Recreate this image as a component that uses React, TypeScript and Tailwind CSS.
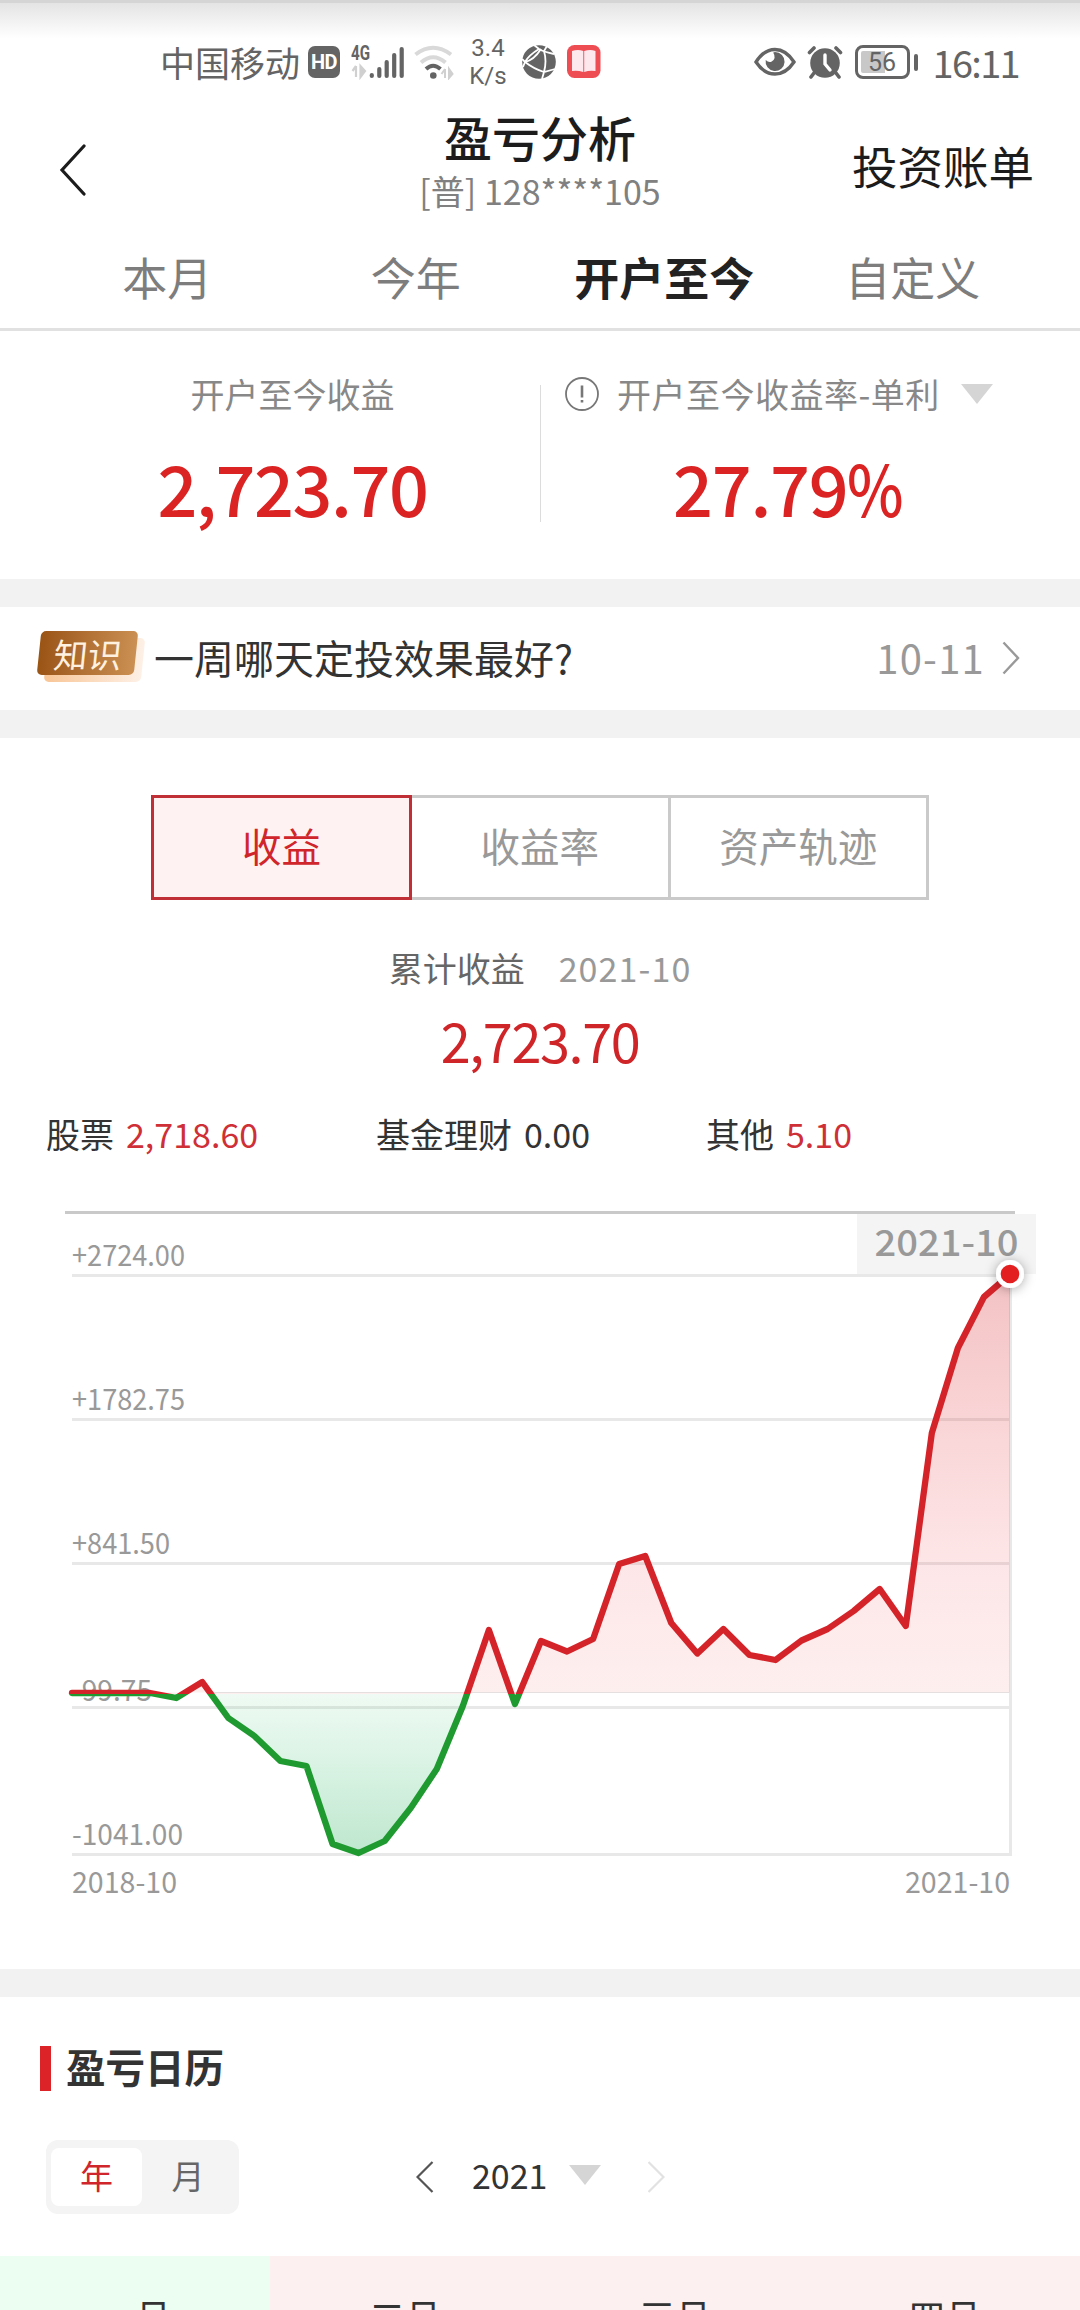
import React, {useState} from "react";
import clsx from "clsx";

const TABS = ["本月", "今年", "开户至今", "自定义"];

const MODES = ["收益", "收益率", "资产轨迹"];

const BREAKDOWN = [
    {label: "股票", value: "2,718.60", up: true},
    {label: "基金理财", value: "0.00", up: false},
    {label: "其他", value: "5.10", up: true},
];

const MONTHS = [
    {label: "一月", loss: true},
    {label: "二月", loss: false},
    {label: "三月", loss: false},
    {label: "四月", loss: false},
];

/**
 * Monthly points in chart space, 2018-10 to 2021-10
 */
const SERIES = [
    483, 483, 483, 483, 488, 472, 508, 526, 551, 556,
    634, 643, 631, 598, 559, 496, 420, 494, 431, 441.5,
    429, 354, 346, 413, 443.5, 419, 445, 450, 430.5, 419,
    401, 379, 416, 223, 138, 87, 64.5,
];

const ZERO = 482.5;
const LEFT = 72;
const RIGHT = 1010;

const GRID = [
    {y: 64.5, label: "+2724.00", width: 113},
    {y: 208.5, label: "+1782.75", width: 113},
    {y: 352.5, label: "+841.50", width: 98},
    {y: 496.5, label: "-99.75", width: 80},
    {y: 643.5, label: "-1041.00", width: 111},
];

function StatusBar() {

    return (
        <div className="flex h-[104px] items-start border-t-[3px] border-[#d5d5d5] bg-linear-to-b from-[#e4e4e4] to-white to-35% pt-[35px] text-[#646464]">

            {/* LEFT */}
            <div className="ml-[160px] flex h-[48px] items-center">

                <span className="w-[148px] text-[35px] leading-[48px] whitespace-nowrap">中国移动</span>

                <span className="flex h-[32px] w-[32px] items-center justify-center rounded-[7px] bg-[#646464] font-[Roboto] text-[20px] leading-none font-bold tracking-[-0.5px] text-white">
                    HD
                </span>

                {/* Mobile signal */}
                <svg width="56" height="36" viewBox="0 0 56 36" className="ml-[11px]">
                    <text x="0" y="16" fontFamily="Roboto" fontSize="20" fontWeight="700" fill="#646464" textLength="19" lengthAdjust="spacingAndGlyphs">4G</text>
                    <path d="M5 22v11M1.500 27l3.500-5M9.500 22v11l4.500-6z" stroke="#d0d0d0" strokeWidth="2.200" fill="#d0d0d0"/>
                    <g stroke="#646464" strokeWidth="4.200" strokeLinecap="round">
                        <path d="M20.800 31v1M28.300 25v7M35.700 18v14M43.200 11v21M50.700 5v27"/>
                    </g>
                </svg>

                {/* Wifi */}
                <svg width="42" height="36" viewBox="0 0 42 36" className="ml-[7px]">
                    <g fill="none" strokeWidth="4">
                        <path d="M1.500 10.500Q19 -3 37 10.500" stroke="#d9d9d9"/>
                        <path d="M7 18.500Q19 8 31.500 18.500" stroke="#d9d9d9"/>
                        <path d="M12 25Q19 18.500 26.500 25" stroke="#646464"/>
                    </g>
                    <circle cx="19.300" cy="31.500" r="3.300" fill="#646464"/>
                    <path d="M31 25v9M27.500 30l3.500-5M35 34v-9l3.500 5z" stroke="#d0d0d0" strokeWidth="2" fill="#d0d0d0"/>
                </svg>

                {/* Net speed */}
                <div className="ml-[12px] flex w-[40px] flex-col items-center text-center font-[Roboto] text-[24px] leading-[28px]">
                    <span>3.4</span>
                    <span>K/s</span>
                </div>

                {/* Browser */}
                <svg width="34" height="34" viewBox="0 0 34 34" className="ml-[14px]">
                    <circle cx="17" cy="17" r="16.800" fill="#646464"/>
                    <g stroke="#fff" strokeWidth="1.800" fill="none">
                        <path d="M12 0L17 4Q22 7 32 9M17 4Q7 10 3 17L0 14M3 17L1 22"/>
                        <path d="M3 17Q12 24 22 27L33 24M22 27L20 34M22 27Q25 16 22 6L25 1"/>
                        <path d="M3 17Q12 15 19 4"/>
                    </g>
                </svg>

                {/* Reader */}
                <svg width="34" height="34" viewBox="0 0 34 34" className="ml-[11px]">
                    <rect width="33.500" height="33" rx="7.500" fill="#ef4d54"/>
                    <path d="M5 6q6-2 11.300 0v21q-6-2-11.300-1zM17.200 6q6-2 11.300 0v20q-6-1-11.300 1z" fill="#fde8ee"/>
                </svg>

            </div>

            {/* RIGHT */}
            <div className="mr-[61px] ml-auto flex h-[48px] items-center">

                <svg width="42" height="30" viewBox="0 0 42 30">
                    <path d="M2 15Q10 2.500 21 2.500T40 15Q32 27 21 27T2 15z" fill="none" stroke="#646464" strokeWidth="3.400"/>
                    <path d="M21 5a9.500 9.500 0 1 1-9.300 8q3 3 6 1.500 5-3 1.500-9z" fill="#646464"/>
                </svg>

                <svg width="36" height="34" viewBox="0 0 36 34" className="ml-[11px]">
                    <circle cx="18" cy="18" r="14.800" fill="#646464"/>
                    <path d="M2.500 7.500L7 3M33.500 7.500L29 3M7 28l-3 4M29 28l3 4" stroke="#646464" strokeWidth="3.600" strokeLinecap="round"/>
                    <path d="M18 10v9l5 6" stroke="#fff" strokeWidth="3.400" strokeLinecap="round" fill="none"/>
                </svg>

                {/* Battery */}
                <div className="ml-[12px] flex items-center">
                    <div className="flex h-[34px] w-[55px] items-center justify-center rounded-[8px] border-[3px] border-[#646464] bg-linear-to-r from-[#c8c8c8] from-56% to-white to-56% bg-clip-content p-[3px] font-[Roboto] text-[25px] leading-none">
                        56
                    </div>
                    <div className="ml-[4px] h-[17px] w-[4px] rounded-full bg-[#646464]"/>
                </div>

                <span className="ml-[15px] text-[38px] leading-[48px] tracking-[-1.7px]">16:11</span>

            </div>

        </div>
    );
}

function Triangle({className}: { className?: string }) {

    return (
        <svg width="32" height="20" viewBox="0 0 32 20" className={className}>
            <path d="M0 0h32L16 20z" fill="#d5d5d5"/>
        </svg>
    );
}

function ProfitChart() {

    const step = (RIGHT - LEFT) / (SERIES.length - 1);

    const points = SERIES.map((y, i) => `${LEFT + i * step},${y}`).join(" ");

    const area = `${LEFT},${ZERO} ${points} ${RIGHT},${ZERO}`;

    return (
        <svg width="1080" height="700" viewBox="0 0 1080 700" className="block">

            <defs>
                <clipPath id="above">
                    <rect x="0" y="0" width="1080" height="484"/>
                </clipPath>
                <clipPath id="below">
                    <rect x="0" y="484" width="1080" height="220"/>
                </clipPath>
                <linearGradient id="gain" gradientUnits="userSpaceOnUse" x1="0" y1="64" x2="0" y2="482">
                    <stop offset="0" stopColor="#d4242a" stopOpacity="0.280"/>
                    <stop offset="0.700" stopColor="#f0303a" stopOpacity="0.120"/>
                    <stop offset="1" stopColor="#f04040" stopOpacity="0.085"/>
                </linearGradient>
                <linearGradient id="loss" gradientUnits="userSpaceOnUse" x1="0" y1="482" x2="0" y2="643">
                    <stop offset="0" stopColor="#20c060" stopOpacity="0.070"/>
                    <stop offset="1" stopColor="#18a850" stopOpacity="0.280"/>
                </linearGradient>
                <filter id="dotShadow" x="-100%" y="-100%" width="300%" height="300%">
                    <feDropShadow dx="0" dy="1" stdDeviation="6" floodOpacity="0.350"/>
                </filter>
            </defs>

            {/* Grid */}
            {GRID.map(({y}) => (
                <line key={y} x1={LEFT} x2={RIGHT} y1={y + 1} y2={y + 1} stroke="#e8e8e8" strokeWidth="3"/>
            ))}
            <line x1="210" x2={RIGHT} y1="482.500" y2="482.500" stroke="#e6e6e6" strokeWidth="1"/>
            <line x1="1010.500" x2="1010.500" y1="64" y2="646" stroke="#e8e8e8" strokeWidth="3"/>
            <line x1="65" x2="1015" y1="2.500" y2="2.500" stroke="#c9c9c9" strokeWidth="3"/>

            {/* Y labels */}
            <g fontSize="29" fill="#999">
                {GRID.map(({y, label, width}) => (
                    <text key={label} x={LEFT} y={label === "-99.75" ? 490.5 : y - 8.5} textLength={width} lengthAdjust="spacingAndGlyphs">
                        {label}
                    </text>
                ))}
                <text x={LEFT} y="683" textLength="105" lengthAdjust="spacingAndGlyphs">2018-10</text>
                <text x="905" y="683" textLength="105" lengthAdjust="spacingAndGlyphs">2021-10</text>
            </g>

            {/* Areas and line, split at zero */}
            <g clipPath="url(#above)">
                <polygon points={area} fill="url(#gain)"/>
                <polyline points={points} fill="none" stroke="#d4242a" strokeWidth="6.300" strokeLinejoin="round" strokeLinecap="round"/>
            </g>
            <g clipPath="url(#below)">
                <polygon points={area} fill="url(#loss)"/>
                <polyline points={points} fill="none" stroke="#1f9a30" strokeWidth="6.300" strokeLinejoin="round" strokeLinecap="round"/>
            </g>

            {/* Marker */}
            <rect x="857" y="4" width="179" height="60" fill="#f4f4f4"/>
            <text x="874.500" y="46" fontSize="36" fontWeight="500" fill="#999" textLength="144" lengthAdjust="spacingAndGlyphs">2021-10</text>
            <circle cx="1010" cy="64" r="14" fill="#fff" filter="url(#dotShadow)"/>
            <circle cx="1010" cy="64" r="9.300" fill="#e3201f"/>

        </svg>
    );
}

function App() {

    const [tab, setTab] = useState("开户至今");
    const [mode, setMode] = useState("收益");

    return (
        <div className="h-[2310px] w-[1080px] overflow-hidden bg-white font-['Noto_Sans_CJK_SC',sans-serif] text-[#333]">

            <StatusBar/>

            {/* HEADER */}
            <header className="flex h-[120px] justify-between">

                <button className="w-[256px] pl-[59px]">
                    <svg width="28" height="52" viewBox="0 0 28 52" className="mb-[-11px]">
                        <path d="M25 2L3 26l22 24" fill="none" stroke="#1c1c1c" strokeWidth="3.200" strokeLinecap="round"/>
                    </svg>
                </button>

                <div className="flex flex-col items-center">
                    <h1 className="h-[66px] text-[48px] leading-[64px] font-medium text-[#1c1c1c]">盈亏分析</h1>
                    <p className="text-[34px] leading-[42px] text-[#808080]">[普] 128****105</p>
                </div>

                <button className="w-[256px] pr-[46px] pt-[2px] text-right text-[45.500px] leading-[54px] text-[#1c1c1c]">
                    投资账单
                </button>

            </header>

            {/* TABS */}
            <nav className="flex h-[107px] border-b-[3px] border-[#e1e1e1] px-[43px]">
                {TABS.map((item) => (
                    <button
                        key={item}
                        onClick={() => setTab(item)}
                        className={clsx(
                            "flex-1 pt-[2px] text-[45px] leading-[60px]",
                            tab === item ? "font-bold text-[#222]" : "text-[#7d7d7d]"
                        )}
                    >
                        {item}
                    </button>
                ))}
            </nav>

            {/* SUMMARY */}
            <section className="flex h-[248px] pt-[39px]">

                <div className="flex w-[540px] flex-col items-center pl-[45px]">
                    <p className="text-[34px] leading-[48px] text-[#888]">开户至今收益</p>
                    <p className="mt-[19px] text-[70px] leading-[100px] font-medium tracking-[-1.4px] text-[#dc2323]">2,723.70</p>
                </div>

                <div className="mt-[15px] h-[137px] w-px bg-[#dcdcdc]"/>

                <div className="flex flex-1 flex-col pl-[24px]">
                    <div className="flex items-center">
                        <svg width="34" height="34" viewBox="0 0 34 34" fill="none" stroke="#777" strokeWidth="1.800">
                            <circle cx="17" cy="17" r="16"/>
                            <path d="M17 8.500v12M17 23v2.500" strokeWidth="2.600"/>
                        </svg>
                        <p className="ml-[18px] text-[34px] leading-[48px] tracking-[0.5px] text-[#888]">开户至今收益率-单利</p>
                        <Triangle className="ml-[21px]"/>
                    </div>
                    <p className="mt-[19px] ml-[108px] text-[70px] leading-[100px] font-medium tracking-[-1.2px] text-[#dc2323]">
                        27.79<span className="inline-block origin-left scale-x-[0.86]">%</span>
                    </p>
                </div>

            </section>

            <div className="h-[28px] bg-[#f2f2f2]"/>

            {/* KNOWLEDGE */}
            <section className="flex h-[103px] items-center pr-[60px] pb-[4px] pl-[39px]">

                <div className="relative mb-[7px] flex h-[44px] w-[97px] items-center justify-center">
                    <div className="absolute top-[7px] left-[7px] h-[44px] w-[97px] -skew-x-6 rounded-[5px] bg-linear-to-r from-[#f8c595] to-[#fdf0e6]"/>
                    <div className="absolute inset-0 -skew-x-6 rounded-[5px] bg-linear-to-r from-[#9a5414] to-[#cb9053]"/>
                    <span className="relative -skew-x-6 text-[34px] leading-[43px] text-[#fff1df]">知识</span>
                </div>

                <p className="ml-[18px] text-[40px] leading-[60px]">一周哪天定投效果最好?</p>

                <div className="ml-auto flex items-center">
                    <span className="text-[40px] leading-[60px] tracking-[1.2px] text-[#999]">10-11</span>
                    <svg width="18" height="34" viewBox="0 0 18 34" className="mt-[3px] ml-[17px]">
                        <path d="M1.500 1.500L16 17 1.500 32.500" fill="none" stroke="#999" strokeWidth="2.400"/>
                    </svg>
                </div>

            </section>

            <div className="h-[28px] bg-[#f2f2f2]"/>

            {/* PROFIT */}
            <section className="h-[1231px] pt-[57px]">

                <div className="mx-auto flex h-[105px] w-[778px]">
                    {MODES.map((item) => (
                        <button
                            key={item}
                            onClick={() => setMode(item)}
                            className={clsx(
                                "pb-[5px] text-[39.500px] leading-[56px]",
                                mode === item
                                    ? "w-[261px] border-[3px] border-[#bf2f35] bg-[#fef3f2] text-[#d0262b]"
                                    : "flex-1 border-y-[3px] border-r-[3px] border-[#cacaca] text-[#999]"
                            )}
                        >
                            {item}
                        </button>
                    ))}
                </div>

                <div className="mt-[43px] flex items-center justify-center gap-[34px] text-[34px] leading-[50px]">
                    <span className="text-[#666]">累计收益</span>
                    <span className="tracking-[1.1px] text-[#999]">2021-10</span>
                </div>

                <p className="mt-[11px] text-center text-[54px] leading-[72px] tracking-[-1.4px] text-[#cf2529]">2,723.70</p>

                <div className="mt-[33px] flex pl-[46px]">
                    {BREAKDOWN.map(({label, value, up}) => (
                        <div key={label} className="flex w-[330px] gap-[12px] text-[34px] leading-[50px]">
                            <span>{label}</span>
                            <span className={up ? "text-[#cf2f36]" : "text-[#333]"}>{value}</span>
                        </div>
                    ))}
                </div>

                <div className="mt-[51px]">
                    <ProfitChart/>
                </div>

            </section>

            <div className="h-[28px] bg-[#f2f2f2]"/>

            {/* CALENDAR */}
            <section>

                <div className="mt-[49px] flex h-[45px] items-center pl-[40px]">
                    <div className="h-full w-[11px] bg-[#dc2328]"/>
                    <h2 className="ml-[15px] pb-[7px] text-[39.500px] leading-[45px] font-bold">盈亏日历</h2>
                </div>

                <div className="mt-[49px] flex h-[74px] items-center pl-[46px]">

                    <div className="flex h-full w-[193px] items-center rounded-[12px] bg-[#f4f4f4] px-[5px] text-[33px]">
                        <button className="h-[58px] w-[91px] rounded-[8px] bg-white pb-[4px] leading-[54px] text-[#d0262b]">年</button>
                        <button className="flex-1 pb-[4px] leading-[54px] text-[#666]">月</button>
                    </div>

                    <svg width="18" height="32" viewBox="0 0 18 32" className="ml-[177px]">
                        <path d="M16.500 1L1.500 16l15 15" fill="none" stroke="#555" strokeWidth="2.200"/>
                    </svg>
                    <span className="mb-[4px] ml-[38px] w-[76px] text-[34px] leading-[50px]">2021</span>
                    <Triangle className="mb-[4px] ml-[21px]"/>
                    <svg width="18" height="32" viewBox="0 0 18 32" className="ml-[46px]">
                        <path d="M1.500 1l15 15-15 15" fill="none" stroke="#e2e2e2" strokeWidth="2.200"/>
                    </svg>

                </div>

                <div className="mt-[42px] grid grid-cols-4">
                    {MONTHS.map(({label, loss}) => (
                        <div
                            key={label}
                            className={clsx(
                                "h-[54px] pt-[34px] text-center text-[36px] leading-[50px]",
                                loss ? "bg-[#ecfdf2]" : "bg-[#fdf0f1]"
                            )}
                        >
                            {label}
                        </div>
                    ))}
                </div>

            </section>

        </div>
    );
}

export default App;
